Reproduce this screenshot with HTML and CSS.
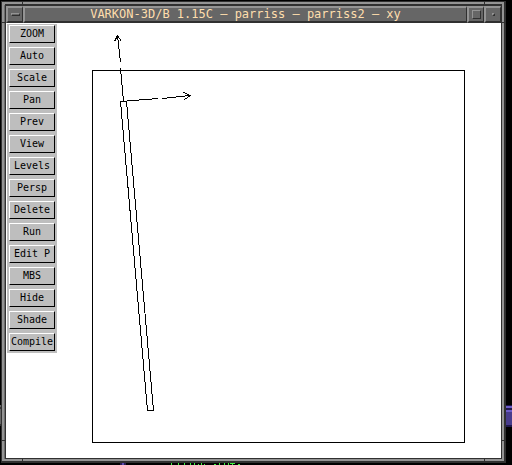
FILE: index.html
```html
<!DOCTYPE html>
<html lang="en">
<head>
  <meta charset="UTF-8">
  <title>VARKON-3D/B</title>
  <meta name="viewport" content="width=device-width, initial-scale=1.0">
  <link rel="stylesheet" href="styles.css">
</head>
<body>

  <div class="desktop">
    <svg class="backdrop left" width="2" height="22" aria-hidden="true">
      <path fill="#666" d="M0 0h2v2h-2zM0 4h2v15h-2z"/>
      <path fill="#333" d="M0 2h2v2h-2zM0 19h2v2h-2z"/>
    </svg>
    <svg class="backdrop right" width="6" height="22" aria-hidden="true">
      <path fill="#20184c" d="M0 0h6v22h-6z"/>
      <path fill="#6c5cc8" d="M0 1h6v2h-6zM0 5h6v2h-6z"/>
      <path fill="#483c8c" d="M0 7h6v13h-6z"/>
    </svg>
    <svg class="backdrop bottom" width="125" height="2" aria-hidden="true">
      <path fill="#281f50" d="M0 0h6v2h-6z"/>
      <path fill="#5c4cb0" d="M2 0h2v2h-2z"/>
      <path fill="#3cf03c" d="M51 0h1v2h-1zM58 0h1v2h-1zM64 0h1v2h-1zM70 0h1v2h-1zM74 0h1v2h-1zM78 1h1v1h-1zM81 0h1v2h-1zM84 1h1v1h-1zM94 1h2v1h-2zM99 0h1v2h-1zM104 0h1v2h-1zM108 0h1v2h-1zM110 0h5v1h-5zM112 1h1v1h-1zM118 1h2v1h-2z"/>
    </svg>

    <div class="window">
      <i class="notch top-left"></i>
      <i class="notch top-right"></i>
      <i class="notch left-top"></i>
      <i class="notch right-top"></i>
      <i class="notch left-bottom"></i>
      <i class="notch right-bottom"></i>
      <i class="notch bottom-left"></i>
      <i class="notch bottom-right"></i>

      <div class="inner">
        <header class="titlebar">
          <button class="ctl menu" aria-label="Window menu"><span></span></button>
          <h1>VARKON-3D/B 1.15C – parriss – parriss2 – xy</h1>
          <button class="ctl minimize" aria-label="Minimize"><span></span></button>
          <button class="ctl maximize" aria-label="Maximize"><span></span></button>
        </header>

        <main class="content">
          <nav class="tools">
            <button>ZOOM</button>
            <button>Auto</button>
            <button>Scale</button>
            <button>Pan</button>
            <button>Prev</button>
            <button>View</button>
            <button>Levels</button>
            <button>Persp</button>
            <button>Delete</button>
            <button>Run</button>
            <button>Edit P</button>
            <button>MBS</button>
            <button>Hide</button>
            <button>Shade</button>
            <button>Compile</button>
          </nav>

          <svg class="drawing" viewBox="57 24 444 434" shape-rendering="crispEdges" role="img" aria-label="Model view xy">
            <g fill="none" stroke="#000" stroke-width="1">
              <rect x="92.5" y="70.5" width="372" height="372"/>
              <path d="M120.5 101.5H126.5L153.5 410.5H147.5Z"/>
              <path d="M123.5 102L120.5 68M120.5 62L117.5 36"/>
              <path d="M114.5 41.5L117.5 35.5L121.5 41.5"/>
              <path d="M120.5 101.5L158 98.5M162 98.5L190 95.5"/>
              <path d="M183.5 92.5L190.5 95.5L184.5 99.5"/>
            </g>
          </svg>
        </main>
      </div>
    </div>
  </div>

</body>
</html>
```
FILE: styles.css
```css
* {
  box-sizing: border-box;
}

body {
  margin: 0;
  background: #000;
  font-family: "DejaVu Sans Mono", "Liberation Mono", monospace;
}

.desktop {
  position: relative;
  min-height: 100vh;
  padding: 1px 6px 2px 1px;
  display: flex;
}

.backdrop {
  position: absolute;
}

.backdrop.left {
  left: 0;
  bottom: 38px;
}

.backdrop.right {
  right: 0;
  bottom: 38px;
}

.backdrop.bottom {
  left: 120px;
  bottom: 0;
}

/* window frame */
.window {
  position: relative;
  flex: 1;
  display: flex;
  background: #949494;
  border: 1px solid #303030;
  border-right-width: 2px;
  border-bottom-width: 2px;
  padding: 3px 2px 2px 3px;
}

.inner {
  flex: 1;
  min-width: 0;
  display: flex;
  flex-direction: column;
  border: 1px solid #303030;
  box-shadow: 0 -1px 0 #303030, -1px 0 0 #6c6c6c;
}

.notch {
  position: absolute;
  background: #303030;
}

.top-left,
.top-right {
  top: 0;
  width: 1px;
  height: 4px;
}

.top-left,
.bottom-left {
  left: 20px;
}

.top-right,
.bottom-right {
  right: 19px;
}

.bottom-left,
.bottom-right {
  bottom: 0;
  width: 1px;
  height: 3px;
}

.left-top,
.right-top,
.left-bottom,
.right-bottom {
  width: 3px;
  height: 1px;
}

.left-top,
.right-top {
  top: 20px;
}

.left-bottom,
.right-bottom {
  bottom: 20px;
}

.left-top,
.left-bottom {
  left: 0;
}

.right-top,
.right-bottom {
  right: 0;
}

/* title bar */
.titlebar {
  display: flex;
  height: 17px;
  background: #666;
}

.titlebar h1,
.ctl {
  margin: 0;
  border: 1px solid;
  border-width: 2px 1px 2px 2px;
  border-color: #949494 #303030 #303030 #949494;
  background: #666;
}

.titlebar h1 {
  flex: 1;
  color: #ffdead;
  font-size: 12px;
  font-weight: normal;
  line-height: 13px;
  text-align: center;
  white-space: nowrap;
  overflow: hidden;
}

.ctl {
  width: 17px;
  padding: 0;
  display: flex;
  align-items: center;
  justify-content: center;
}

.ctl span {
  display: block;
  border: 1px solid;
  border-color: #949494 #303030 #303030 #949494;
}

.menu span {
  width: 9px;
  height: 3px;
}

.minimize span {
  width: 9px;
  height: 9px;
}

.maximize span {
  width: 3px;
  height: 3px;
}

/* client area */
.content {
  flex: 1;
  display: flex;
  align-items: flex-start;
  padding: 1px 0 0 1px;
  background: #fff;
}

.tools {
  width: 50px;
  padding: 1px 2px 2px;
  display: flex;
  flex-direction: column;
  gap: 4px;
  background: #bebebe;
}

.tools button {
  height: 18px;
  padding: 0;
  border: 1px solid;
  border-color: #fff #000 #000 #fff;
  background: #bebebe;
  color: #000;
  font-family: inherit;
  font-size: 10px;
  line-height: 16px;
}

.drawing {
  flex: 1;
  min-width: 0;
}
```
